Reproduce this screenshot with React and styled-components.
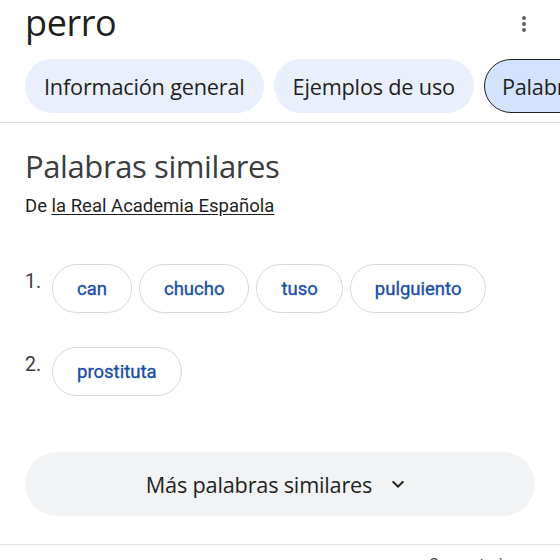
import React from 'react';
import styled, { createGlobalStyle } from 'styled-components';

const GlobalStyle = createGlobalStyle`
  html, body {
    margin: 0;
    padding: 0;
    background: #fff;
    overflow: hidden;
  }
  body {
    font-family: Roboto, "Liberation Sans", sans-serif;
    color: #1f1f1f;
  }
`;

const Page = styled.div`
  width: 560px;
  height: 560px;
  overflow: hidden;
`;

const Header = styled.div`
  display: flex;
  align-items: center;
  justify-content: space-between;
  height: 46px;
  padding: 0 34px 0 25px;
`;

const Word = styled.h1`
  margin: 0;
  font-family: "Open Sans", sans-serif;
  font-weight: 400;
  font-size: 36px;
  letter-spacing: -0.4px;
  color: #1f1f1f;
  line-height: 46px;
`;

const Kebab = styled.button`
  border: none;
  background: transparent;
  padding: 0;
  display: flex;
  flex-direction: column;
  gap: 2px;
  margin-top: 2px;

  span {
    width: 4px;
    height: 4px;
    border-radius: 50%;
    background: #5f6368;
  }
`;

const Tabs = styled.div`
  display: flex;
  gap: 10px;
  padding: 13px 0 9px 25px;
  border-bottom: 1px solid #dcdcdc;
  white-space: nowrap;
`;

const Tab = styled.button`
  flex-shrink: 0;
  height: 54px;
  padding: 0 ${(p) => (p.$active ? 17 : 19)}px;
  border-radius: 27px;
  border: ${(p) => (p.$active ? '1.5px solid #1f1f1f' : 'none')};
  background: ${(p) => (p.$active ? '#d3e3fd' : '#e9effb')};
  font-family: "Open Sans", sans-serif;
  font-size: 21.7px;
  letter-spacing: -0.2px;
  color: #1f1f1f;
`;

const Section = styled.section`
  padding: 24px 25px 0;
`;

const Title = styled.h2`
  margin: 0;
  font-family: "Open Sans", sans-serif;
  font-weight: 400;
  font-size: 31px;
  letter-spacing: -0.4px;
  color: #3c3c3c;
  line-height: 38px;
`;

const Source = styled.p`
  margin: 9px 0 0;
  font-size: 18.5px;
  color: #1f1f1f;
  line-height: 24px;

  a {
    color: inherit;
    text-decoration: underline;
    text-underline-offset: 2px;
  }
`;

const Senses = styled.ol`
  list-style: none;
  margin: 46px 0 0;
  padding: 0;
  display: flex;
  flex-direction: column;
  gap: 34px;
`;

const Sense = styled.li`
  display: flex;
  align-items: flex-start;
`;

const Num = styled.span`
  width: 27px;
  font-size: 19.5px;
  color: #3c3c3c;
  padding-top: 6px;
`;

const Chips = styled.div`
  display: flex;
  flex-wrap: wrap;
  gap: 7px;
`;

const Chip = styled.button`
  height: 49px;
  padding: 0 24px;
  border: 1px solid #d6d6d6;
  border-radius: 25px;
  background: #fff;
  font-family: Roboto, sans-serif;
  font-size: 18.5px;
  font-weight: 400;
  -webkit-text-stroke: 0.35px #1a4fa8;
  color: #1a4fa8;
`;

const MoreButton = styled.button`
  margin-top: 56px;
  width: 100%;
  height: 64px;
  border: none;
  border-radius: 32px;
  background: #f1f3f4;
  display: flex;
  align-items: center;
  justify-content: center;
  gap: 18px;
  padding: 0 8px 0 0;
  font-family: "Open Sans", sans-serif;
  font-size: 21.7px;
  letter-spacing: -0.2px;
  color: #1f1f1f;
`;

const Footer = styled.div`
  margin-top: 28px;
  border-top: 1px solid #dcdcdc;
  display: flex;
  justify-content: flex-end;
  padding: 10px 40px 0 0;
  font-size: 16px;
  color: #444;
`;

const senses = [
  ['can', 'chucho', 'tuso', 'pulguiento'],
  ['prostituta'],
];

export default function App() {
  return (
    <Page>
      <GlobalStyle />
      <Header>
        <Word>perro</Word>
        <Kebab aria-label="Más opciones">
          <span />
          <span />
          <span />
        </Kebab>
      </Header>
      <Tabs>
        <Tab>Información general</Tab>
        <Tab>Ejemplos de uso</Tab>
        <Tab $active>Palabras similares</Tab>
      </Tabs>
      <Section>
        <Title>Palabras similares</Title>
        <Source>
          De <a href="#">la Real Academia Española</a>
        </Source>
        <Senses>
          {senses.map((words, i) => (
            <Sense key={i}>
              <Num>{i + 1}.</Num>
              <Chips>
                {words.map((w) => (
                  <Chip key={w}>{w}</Chip>
                ))}
              </Chips>
            </Sense>
          ))}
        </Senses>
        <MoreButton>
          Más palabras similares
          <svg width="16" height="16" viewBox="0 0 24 24" fill="none">
            <path d="M4 8l8 8 8-8" stroke="#1f1f1f" strokeWidth="3" />
          </svg>
        </MoreButton>
      </Section>
      <Footer>Comentarios</Footer>
    </Page>
  );
}
